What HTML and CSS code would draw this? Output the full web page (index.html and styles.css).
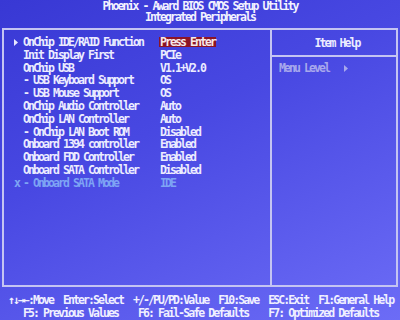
FILE: index.html
```html
<!DOCTYPE html>
<html>
<head>
<meta charset="utf-8">
<link rel="stylesheet" href="styles.css">
</head>
<body>
<div class="screen">
  <header class="title">
    <div class="tline">Phoenix - Award BIOS CMOS Setup Utility</div>
    <div class="tline">Integrated Peripherals</div>
  </header>
  <main class="box">
    <section class="items">
      <div class="row"><span class="mark"><svg width="4" height="7" viewBox="0 0 4 7"><polygon points="0,0 4,3.5 0,7" fill="#e8e8ff"/></svg></span><span class="label">OnChip IDE/RAID Function</span><span class="value sel">Press Enter</span></div>
      <div class="row"><span class="mark"></span><span class="label">Init Display First</span><span class="value">PCIe</span></div>
      <div class="row"><span class="mark"></span><span class="label">OnChip USB</span><span class="value">V1.1+V2.0</span></div>
      <div class="row"><span class="mark"></span><span class="label">- USB Keyboard Support</span><span class="value">OS</span></div>
      <div class="row"><span class="mark"></span><span class="label">- USB Mouse Support</span><span class="value">OS</span></div>
      <div class="row"><span class="mark"></span><span class="label">OnChip Audio Controller</span><span class="value">Auto</span></div>
      <div class="row"><span class="mark"></span><span class="label">OnChip LAN Controller</span><span class="value">Auto</span></div>
      <div class="row"><span class="mark"></span><span class="label">- OnChip LAN Boot ROM</span><span class="value">Disabled</span></div>
      <div class="row"><span class="mark"></span><span class="label">Onboard 1394 controller</span><span class="value">Enabled</span></div>
      <div class="row"><span class="mark"></span><span class="label">Onboard FDD Controller</span><span class="value">Enabled</span></div>
      <div class="row"><span class="mark"></span><span class="label">Onboard SATA Controller</span><span class="value">Disabled</span></div>
      <div class="row off"><span class="mark">x</span><span class="label">- Onboard SATA Mode</span><span class="value">IDE</span></div>
    </section>
    <aside class="help">
      <div class="help-head">Item Help</div>
      <div class="help-body"><span class="hl">Menu Level   </span><svg width="4" height="7" viewBox="0 0 4 7"><polygon points="0,0 4,3.5 0,7" fill="#a8a8ec"/></svg></div>
    </aside>
  </main>
  <footer class="keys">
    <div class="kline">↑↓→←:Move  Enter:Select  +/-/PU/PD:Value  F10:Save  ESC:Exit  F1:General Help</div>
    <div class="kline">   F5: Previous Values    F6: Fail-Safe Defaults    F7: Optimized Defaults</div>
  </footer>
</div>
</body>
</html>
```
FILE: styles.css
```css
html, body {
  margin: 0;
  padding: 0;
}

.screen {
  width: 400px;
  height: 320px;
  overflow: hidden;
  box-sizing: border-box;
  display: flex;
  flex-direction: column;
  background: linear-gradient(155deg, #3838d4 0%, #4848e2 40%, #5a5aec 70%, #6c6cf6 100%);
  font-family: "DejaVu Sans Mono", monospace;
  font-weight: bold;
  font-size: 11.5px;
  letter-spacing: -1.92px;
  line-height: 12px;
  color: #ececff;
}

.title {
  flex: none;
  height: 22px;
  box-sizing: border-box;
  padding-top: 1px;
  text-align: center;
  color: #f2f2ff;
}

.tline {
  height: 10.5px;
  line-height: 10.5px;
}

.box {
  flex: none;
  margin: 6px 2px 0 2px;
  height: 259px;
  box-sizing: border-box;
  border: 2px solid #c4c4f2;
  display: grid;
  grid-template-columns: 268px 1fr;
  grid-template-rows: 100%;
  overflow: hidden;
}

.items {
  border-right: 2px solid #c4c4f2;
  padding: 6px 0 0 10px;
}

.row {
  display: grid;
  grid-template-columns: 9px 137px auto;
  align-items: center;
  height: 12.8px;
  line-height: 12.8px;
  white-space: pre;
}

.mark {
  display: flex;
  align-items: center;
  height: 12.8px;
}

.value {
  justify-self: start;
}

.sel {
  background: #8c1426;
  color: #f6eaea;
  line-height: 10px;
  height: 10px;
  padding: 0 1px;
  margin-left: -1px;
}

.off {
  color: #7ea4f4;
}

.help {
  display: flex;
  flex-direction: column;
}

.help-head {
  height: 25px;
  flex: none;
  border-bottom: 2px solid #c4c4f2;
  display: flex;
  align-items: center;
  justify-content: center;
  padding-left: 6px;
}

.help-body {
  padding: 5px 0 0 7px;
  height: 12.8px;
  line-height: 12.8px;
  color: #a8a8ec;
  display: flex;
  align-items: center;
}

.hl {
  white-space: pre;
}

.keys {
  flex: none;
  margin-top: 7px;
  padding-left: 8px;
  height: 26px;
  color: #f0f0ff;
}

.kline {
  height: 13px;
  line-height: 13px;
  white-space: pre;
}
```
